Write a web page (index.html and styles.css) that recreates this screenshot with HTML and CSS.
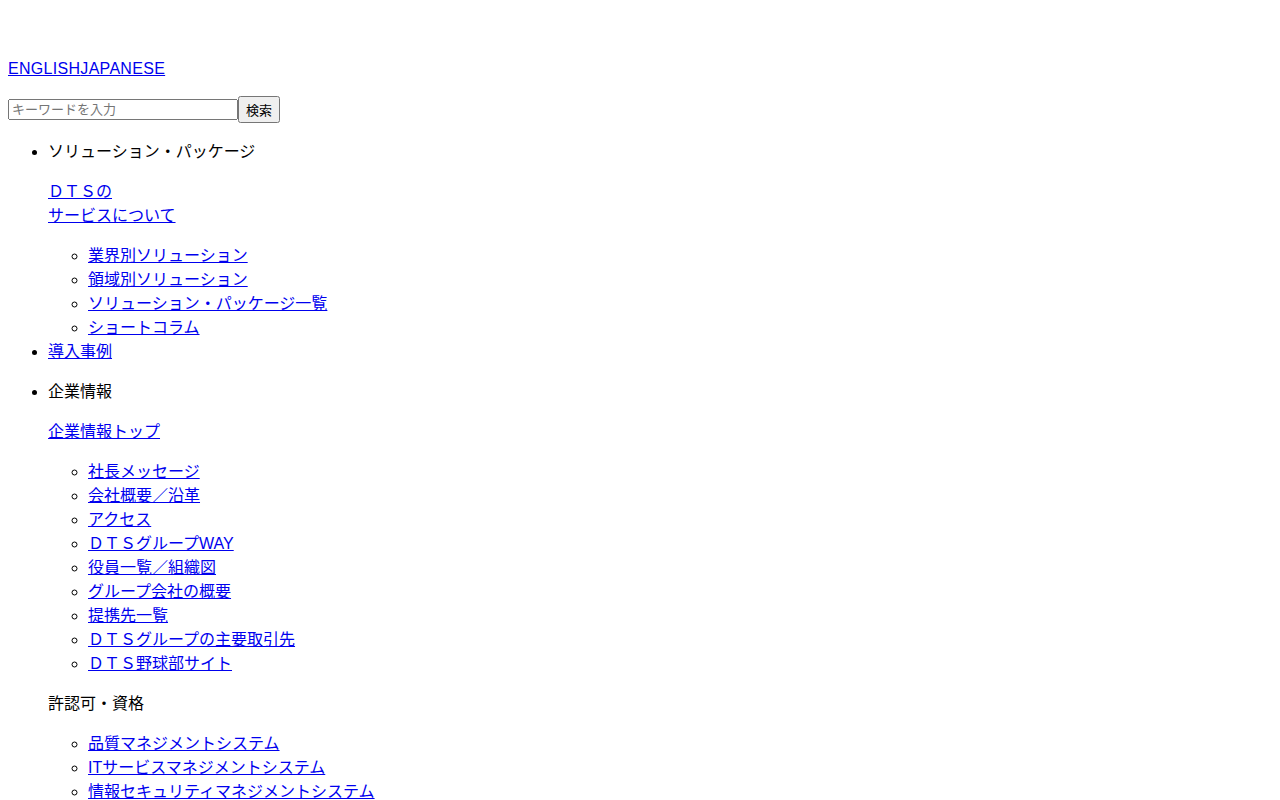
FILE: index.html
```html
<!DOCTYPE html>
<html lang="ja">
<head>
    <meta charset="UTF-8">
    <meta name="viewport" content="width=device-width, initial-scale=1.0">
    <title>DTS</title>
    <link rel="stylesheet" href="styles.css">
</head>
<body>

    <!-- Header -->
    <div class="logo-space"></div>

    <div class="lang">
        <a href="#">ENGLISH</a><a href="#">JAPANESE</a>
    </div>

    <form class="search-form">
        <input type="text" class="search-input" placeholder="キーワードを入力"><button type="submit" class="search-button">検索</button>
    </form>

    <!-- Global navigation -->
    <ul class="nav">
        <li>
            <p>ソリューション・パッケージ</p>
            <p><a href="#">ＤＴＳの<br>サービスについて</a></p>
            <ul>
                <li><a href="#">業界別ソリューション</a></li>
                <li><a href="#">領域別ソリューション</a></li>
                <li><a href="#">ソリューション・パッケージ一覧</a></li>
                <li><a href="#">ショートコラム</a></li>
            </ul>
        </li>
        <li><a href="#">導入事例</a></li>
        <li>
            <p>企業情報</p>
            <p><a href="#">企業情報トップ</a></p>
            <ul>
                <li><a href="#">社長メッセージ</a></li>
                <li><a href="#">会社概要／沿革</a></li>
                <li><a href="#">アクセス</a></li>
                <li><a href="#">ＤＴＳグループWAY</a></li>
                <li><a href="#">役員一覧／組織図</a></li>
                <li><a href="#">グループ会社の概要</a></li>
                <li><a href="#">提携先一覧</a></li>
                <li><a href="#">ＤＴＳグループの主要取引先</a></li>
                <li><a href="#">ＤＴＳ野球部サイト</a></li>
            </ul>
            <p>許認可・資格</p>
            <ul>
                <li><a href="#">品質マネジメントシステム</a></li>
                <li><a href="#">ITサービスマネジメントシステム</a></li>
                <li><a href="#">情報セキュリティマネジメントシステム</a></li>
            </ul>
        </li>
    </ul>

</body>
</html>
```

FILE: styles.css
```css
body {
    font-family: "Liberation Sans", "Noto Sans CJK JP", sans-serif;
    font-size: 16px;
    line-height: 24px;
    color: #000;
    margin: 8px;
}

a {
    color: #0000ee;
}

/* Header */
.logo-space {
    height: 49px;
}

.lang {
    letter-spacing: 0.3px;
}

.search-form {
    margin: 15px 0 17px;
    display: flex;
    align-items: center;
}

.search-input {
    width: 230px;
    height: 21px;
    box-sizing: border-box;
    margin: 0;
    font-family: "Liberation Sans", "Noto Sans CJK JP", sans-serif;
    font-size: 13px;
}

.search-button {
    height: 27px;
    margin: 0;
    font-family: "Liberation Sans", "Noto Sans CJK JP", sans-serif;
    font-size: 13px;
}

/* Navigation */
.nav p {
    margin: 16px 0;
}

.nav ul {
    margin-bottom: 0;
}
```
